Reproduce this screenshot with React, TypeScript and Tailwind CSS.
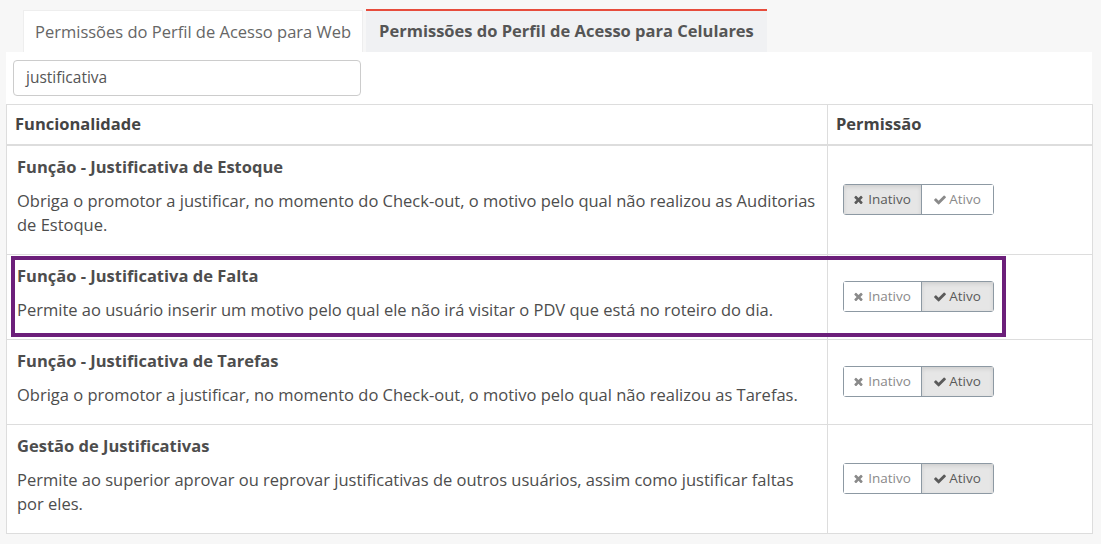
type Row = {
  title: string
  desc: string
  active: boolean
  highlight?: boolean
}

const rows: Row[] = [
  {
    title: "Função - Justificativa de Estoque",
    desc: "Obriga o promotor a justificar, no momento do Check-out, o motivo pelo qual não realizou as Auditorias de Estoque.",
    active: false,
  },
  {
    title: "Função - Justificativa de Falta",
    desc: "Permite ao usuário inserir um motivo pelo qual ele não irá visitar o PDV que está no roteiro do dia.",
    active: true,
    highlight: true,
  },
  {
    title: "Função - Justificativa de Tarefas",
    desc: "Obriga o promotor a justificar, no momento do Check-out, o motivo pelo qual não realizou as Tarefas.",
    active: true,
  },
  {
    title: "Gestão de Justificativas",
    desc: "Permite ao superior aprovar ou reprovar justificativas de outros usuários, assim como justificar faltas por eles.",
    active: true,
  },
]

const TimesIcon = () => (
  <svg viewBox="100 250 1210 1290" className="h-[9px] w-[9px]" fill="currentColor">
    <path d="M1298 1322q0 40-28 68l-136 136q-28 28-68 28t-68-28l-294-294-294 294q-28 28-68 28t-68-28l-136-136q-28-28-28-68t28-68l294-294-294-294q-28-28-28-68t28-68l136-136q28-28 68-28t68 28l294 294 294-294q28-28 68-28t68 28l136 136q28 28 28 68t-28 68l-294 294 294 294q28 28 28 68z" />
  </svg>
)

const CheckIcon = () => (
  <svg viewBox="110 320 1570 1210" className="h-[10px] w-[12px]" fill="currentColor">
    <path d="M1671 566q0 40-28 68l-724 724-136 136q-28 28-68 28t-68-28l-136-136-362-362q-28-28-28-68t28-68l136-136q28-28 68-28t68 28l294 295 656-657q28-28 68-28t68 28l136 136q28 28 28 68z" />
  </svg>
)

function Toggle({ active }: { active: boolean }) {
  const on = "bg-[#e6e6e6] text-[#5a5a5a] shadow-[inset_0_2px_4px_rgba(0,0,0,0.1)]"
  const off = "bg-white text-[#8a8a8a]"
  return (
    <div className="inline-flex h-[31px] rounded-[3px] border border-[#8d99a3] text-[13.5px] leading-none">
      <span
        className={`flex w-[78px] items-center justify-center gap-[5px] border-r border-[#8d99a3] ${active ? off : on}`}
      >
        <TimesIcon />
        Inativo
      </span>
      <span className={`flex w-[71px] items-center justify-center gap-[3px] ${active ? on : off}`}>
        <CheckIcon />
        Ativo
      </span>
    </div>
  )
}

export default function App() {
  return (
    <div className="h-[544px] w-[1101px] bg-[#f7f7f7] pr-[9px] pl-[6px] pt-[9px] font-['Open_Sans',sans-serif] text-[#555]">
      <div className="flex pl-[17px]">
        <div className="mt-[1px] h-[42px] border border-b-0 border-[#eee] bg-white px-[11px] text-[16.5px] leading-[41px] text-[#666]">
          Permissões do Perfil de Acesso para Web
        </div>
        <div className="ml-[3px] h-[43px] border-t-2 border-[#e74c3c] bg-[#f0f1f3] px-[13px] text-[16.5px] leading-[39px] font-bold text-[#555]">
          Permissões do Perfil de Acesso para Celulares
        </div>
      </div>

      <div className="bg-white pt-[8px]">
        <div className="ml-[7px] flex h-[36px] w-[348px] items-center rounded-[4px] border border-[#ccc] px-[12px] text-[15.5px] text-[#555]">
          justificativa
        </div>

        <table className="mt-[8px] w-[1086px] table-fixed border-collapse border border-[#ddd]">
          <colgroup>
            <col className="w-[821px]" />
            <col className="w-[265px]" />
          </colgroup>
          <thead>
            <tr className="h-[40px] border-b-2 border-[#ddd]">
              <th className="border border-b-2 border-[#ddd] px-[8px] text-left text-[16.5px] font-bold text-[#444]">
                Funcionalidade
              </th>
              <th className="border border-b-2 border-[#ddd] px-[8px] text-left text-[16.5px] font-bold text-[#444]">
                Permissão
              </th>
            </tr>
          </thead>
          <tbody>
            {rows.map((r) => (
              <tr key={r.title} className="border-t border-[#ddd]">
                <td className="relative border border-[#ddd] px-[10px] pt-[10px] pb-[8px] align-top">
                  <div className="mb-[11px] text-[16.5px] leading-[22px] font-bold text-[#4d4d4d]">{r.title}</div>
                  <p className="mb-[9px] text-[16.5px] leading-[24px] text-[#4d4d4d]">{r.desc}</p>
                  {r.highlight && (
                    <div className="pointer-events-none absolute top-[1px] left-[4px] h-[81px] w-[995px] border-4 border-[#6c1f7a]" />
                  )}
                </td>
                <td className="border border-[#ddd] px-[15px] align-middle">
                  <Toggle active={r.active} />
                </td>
              </tr>
            ))}
          </tbody>
        </table>
      </div>
    </div>
  )
}
